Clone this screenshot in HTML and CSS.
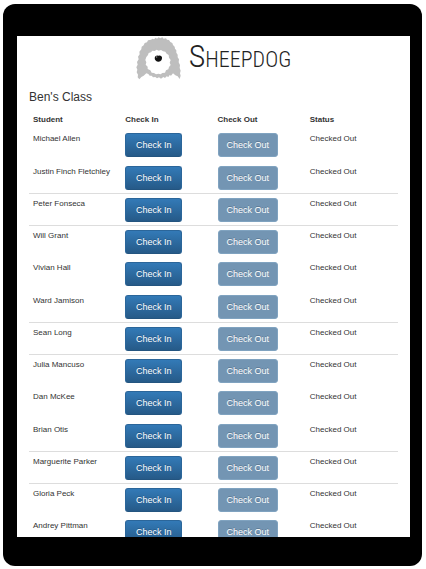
FILE: index.html
```html
<!DOCTYPE html>
<html lang="en">
<head>
<meta charset="utf-8">
<meta name="viewport" content="width=device-width, initial-scale=1">
<title>Sheepdog</title>
<link rel="stylesheet" href="styles.css">
</head>
<body>
<div class="device">
<main class="screen">
<header class="brand">
<svg class="brand-mark" viewBox="0 0 135 129" aria-hidden="true">
<path fill="#bebebe" d="M45 8 50 5 54 7 59 2 63 5 68 1 73 4 79 1 83 5 90 4 93 8 99 9 103 15 109 18 111 24 116 29 117 35 121 40 121 47 125 53 125 61 129 67 128 76 132 84 131 93 134 101 132 109 134 116 131 126 125 118 118 115 111 109 105 116 101 114 97 120 92 118 87 123 82 120 75 125 69 121 63 124 58 120 51 121 47 116 41 116 37 111 31 109 23 116 16 120 10 127 5 121 6 113 2 106 4 98 1 91 5 83 3 75 8 67 6 59 11 52 10 44 16 37 17 29 23 25 26 18 33 16 36 10Z"/>
<path fill="#fff" d="M31 60 36 54 38 48 45 46 49 41 56 42 62 38 68 41 75 39 81 43 88 44 92 50 98 54 99 62 104 69 101 77 104 84 99 90 97 97 90 100 87 107 79 108 74 112 67 110 60 112 54 108 47 107 43 100 35 96 35 89 29 83 31 76 28 69Z"/>
<path fill="#111" d="M56 62Q58 54 67 56Q76 54 78 61Q79 73 68 74Q56 73 56 62Z"/>
<circle cx="62" cy="60" r="2" fill="#999"/>
</svg>
<span class="brand-name"><span class="brand-initial">S</span>HEEPDOG</span>
</header>
<h1 class="title">Ben's Class</h1>
<table class="roster">
<thead><tr><th scope="col">Student</th><th scope="col">Check In</th><th scope="col">Check Out</th><th scope="col">Status</th></tr></thead>
<tbody>
<tr><td>Michael Allen</td><td><button type="button" class="btn">Check In</button></td><td><button type="button" class="btn" disabled>Check Out</button></td><td>Checked Out</td></tr>
<tr><td>Justin Finch Fletchley</td><td><button type="button" class="btn">Check In</button></td><td><button type="button" class="btn" disabled>Check Out</button></td><td>Checked Out</td></tr>
<tr class="ruled"><td>Peter Fonseca</td><td><button type="button" class="btn">Check In</button></td><td><button type="button" class="btn" disabled>Check Out</button></td><td>Checked Out</td></tr>
<tr class="ruled"><td>Will Grant</td><td><button type="button" class="btn">Check In</button></td><td><button type="button" class="btn" disabled>Check Out</button></td><td>Checked Out</td></tr>
<tr><td>Vivian Hall</td><td><button type="button" class="btn">Check In</button></td><td><button type="button" class="btn" disabled>Check Out</button></td><td>Checked Out</td></tr>
<tr><td>Ward Jamison</td><td><button type="button" class="btn">Check In</button></td><td><button type="button" class="btn" disabled>Check Out</button></td><td>Checked Out</td></tr>
<tr class="ruled"><td>Sean Long</td><td><button type="button" class="btn">Check In</button></td><td><button type="button" class="btn" disabled>Check Out</button></td><td>Checked Out</td></tr>
<tr class="ruled"><td>Julia Mancuso</td><td><button type="button" class="btn">Check In</button></td><td><button type="button" class="btn" disabled>Check Out</button></td><td>Checked Out</td></tr>
<tr><td>Dan McKee</td><td><button type="button" class="btn">Check In</button></td><td><button type="button" class="btn" disabled>Check Out</button></td><td>Checked Out</td></tr>
<tr><td>Brian Otis</td><td><button type="button" class="btn">Check In</button></td><td><button type="button" class="btn" disabled>Check Out</button></td><td>Checked Out</td></tr>
<tr class="ruled"><td>Marguerite Parker</td><td><button type="button" class="btn">Check In</button></td><td><button type="button" class="btn" disabled>Check Out</button></td><td>Checked Out</td></tr>
<tr class="ruled"><td>Gloria Peck</td><td><button type="button" class="btn">Check In</button></td><td><button type="button" class="btn" disabled>Check Out</button></td><td>Checked Out</td></tr>
<tr><td>Andrey Pittman</td><td><button type="button" class="btn">Check In</button></td><td><button type="button" class="btn" disabled>Check Out</button></td><td>Checked Out</td></tr>
</tbody>
</table>
</main>
</div>
</body>
</html>
```
FILE: styles.css
```css
* {
  box-sizing: border-box;
}

body {
  margin: 0;
  height: 100vh;
  padding: 4px 4px 3px 3px;
  background: #fff;
  color: #333;
  font-family: "Liberation Sans", Arial, sans-serif;
  font-size: 8px;
  line-height: 12px;
}

.device {
  height: 100%;
  padding: 32px 12px 29px 14px;
  border-radius: 12px;
  background: #000;
}

.screen {
  height: 100%;
  padding: 0 12px;
  overflow: hidden;
  background: #fff;
}

.brand {
  display: flex;
  justify-content: center;
  align-items: center;
  gap: 8px;
  height: 44px;
}

.brand-mark {
  width: 45px;
  height: 43px;
}

.brand-name {
  color: #222;
  font-family: "Roboto Condensed", "Open Sans Condensed", Roboto, sans-serif;
  font-size: 22px;
  font-weight: 300;
  line-height: 40px;
}

.brand-initial {
  font-size: 32px;
}

.title {
  margin: 9px 0 8px;
  font-size: 12px;
  font-weight: 400;
  line-height: 16px;
}

.roster {
  width: 100%;
  table-layout: fixed;
  border-collapse: separate;
  border-spacing: 0;
}

.roster th {
  padding: 1px 4px 2px;
  text-align: left;
}

.roster td {
  height: 32px;
  padding: 4px 4px 3px;
  border-top: 1px solid transparent;
  vertical-align: top;
  white-space: nowrap;
}

.roster tbody tr:nth-child(4n + 1) td {
  height: 33px;
}

.roster .ruled td {
  border-top-color: #ddd;
}

.btn {
  display: block;
  min-width: 57px;
  height: 24px;
  padding: 0 8px;
  border: 1px solid #245580;
  border-color: #2b669a #2b669a #245580;
  border-radius: 3px;
  background: linear-gradient(#337ab7, #265a88);
  color: #fff;
  font-family: inherit;
  font-size: 9px;
  line-height: 22px;
  text-shadow: 0 -1px 0 rgba(0, 0, 0, 0.2);
}

.btn:disabled {
  border-color: #80a3c0;
  background: #7395b3;
}
```
